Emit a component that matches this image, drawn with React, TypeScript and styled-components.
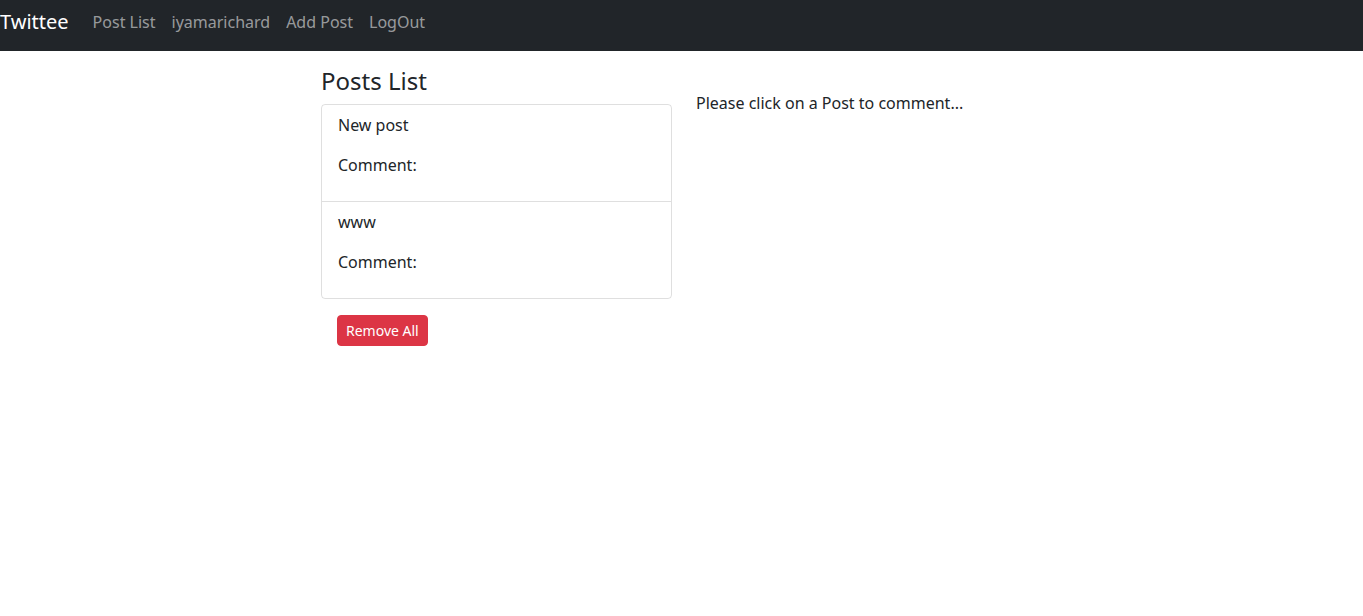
import React from "react";
import styled, { createGlobalStyle } from "styled-components";

const GlobalStyle = createGlobalStyle`
  * { box-sizing: border-box; }
  body {
    margin: 0;
    font-family: "Noto Sans", "Open Sans", sans-serif;
    font-size: 16px;
    line-height: 1.5;
    color: #212529;
    background: #fff;
  }
`;

const Navbar = styled.nav`
  display: flex;
  align-items: center;
  height: 51px;
  padding-bottom: 7px;
  background: #212529;
`;

const Brand = styled.a`
  font-size: 20px;
  line-height: 30px;
  color: #fff;
  margin-right: 16px;
  text-decoration: none;
`;

const NavLink = styled.a`
  padding: 0 8px;
  font-size: 16px;
  line-height: 24px;
  color: rgba(255, 255, 255, 0.55);
  text-decoration: none;
`;

const Container = styled.main`
  width: 721px;
  margin: 0 auto;
  display: flex;
  gap: 24px;
  align-items: flex-start;
`;

const LeftCol = styled.section`
  width: 351px;
  flex: none;
`;

const Title = styled.h4`
  margin: 15px 0 9px;
  font-size: 24px;
  font-weight: 400;
  line-height: 29px;
`;

const List = styled.ul`
  list-style: none;
  margin: 0;
  padding: 0;
  border: 1px solid rgba(0, 0, 0, 0.125);
  border-radius: 4px;
`;

const Item = styled.li`
  padding: 8px 16px;
  & + & {
    border-top: 1px solid rgba(0, 0, 0, 0.125);
  }
`;

const Para = styled.p`
  margin: 0 0 16px;
`;

const DangerButton = styled.button`
  margin: 16px 0 0 16px;
  padding: 4px 8px;
  font-family: inherit;
  font-size: 14px;
  line-height: 21px;
  color: #fff;
  background: #dc3545;
  border: 1px solid #dc3545;
  border-radius: 4px;
`;

const RightCol = styled.section`
  flex: 1;
  padding-top: 40px;
`;

const posts = ["New post", "www"];

export default function App() {
  return (
    <>
      <GlobalStyle />
      <Navbar>
        <Brand href="#">Twittee</Brand>
        <NavLink href="#">Post List</NavLink>
        <NavLink href="#">iyamarichard</NavLink>
        <NavLink href="#">Add Post</NavLink>
        <NavLink href="#">LogOut</NavLink>
      </Navbar>
      <Container>
        <LeftCol>
          <Title>Posts List</Title>
          <List>
            {posts.map((p) => (
              <Item key={p}>
                <Para>{p}</Para>
                <Para>Comment:</Para>
              </Item>
            ))}
          </List>
          <DangerButton>Remove All</DangerButton>
        </LeftCol>
        <RightCol>Please click on a Post to comment...</RightCol>
      </Container>
    </>
  );
}
